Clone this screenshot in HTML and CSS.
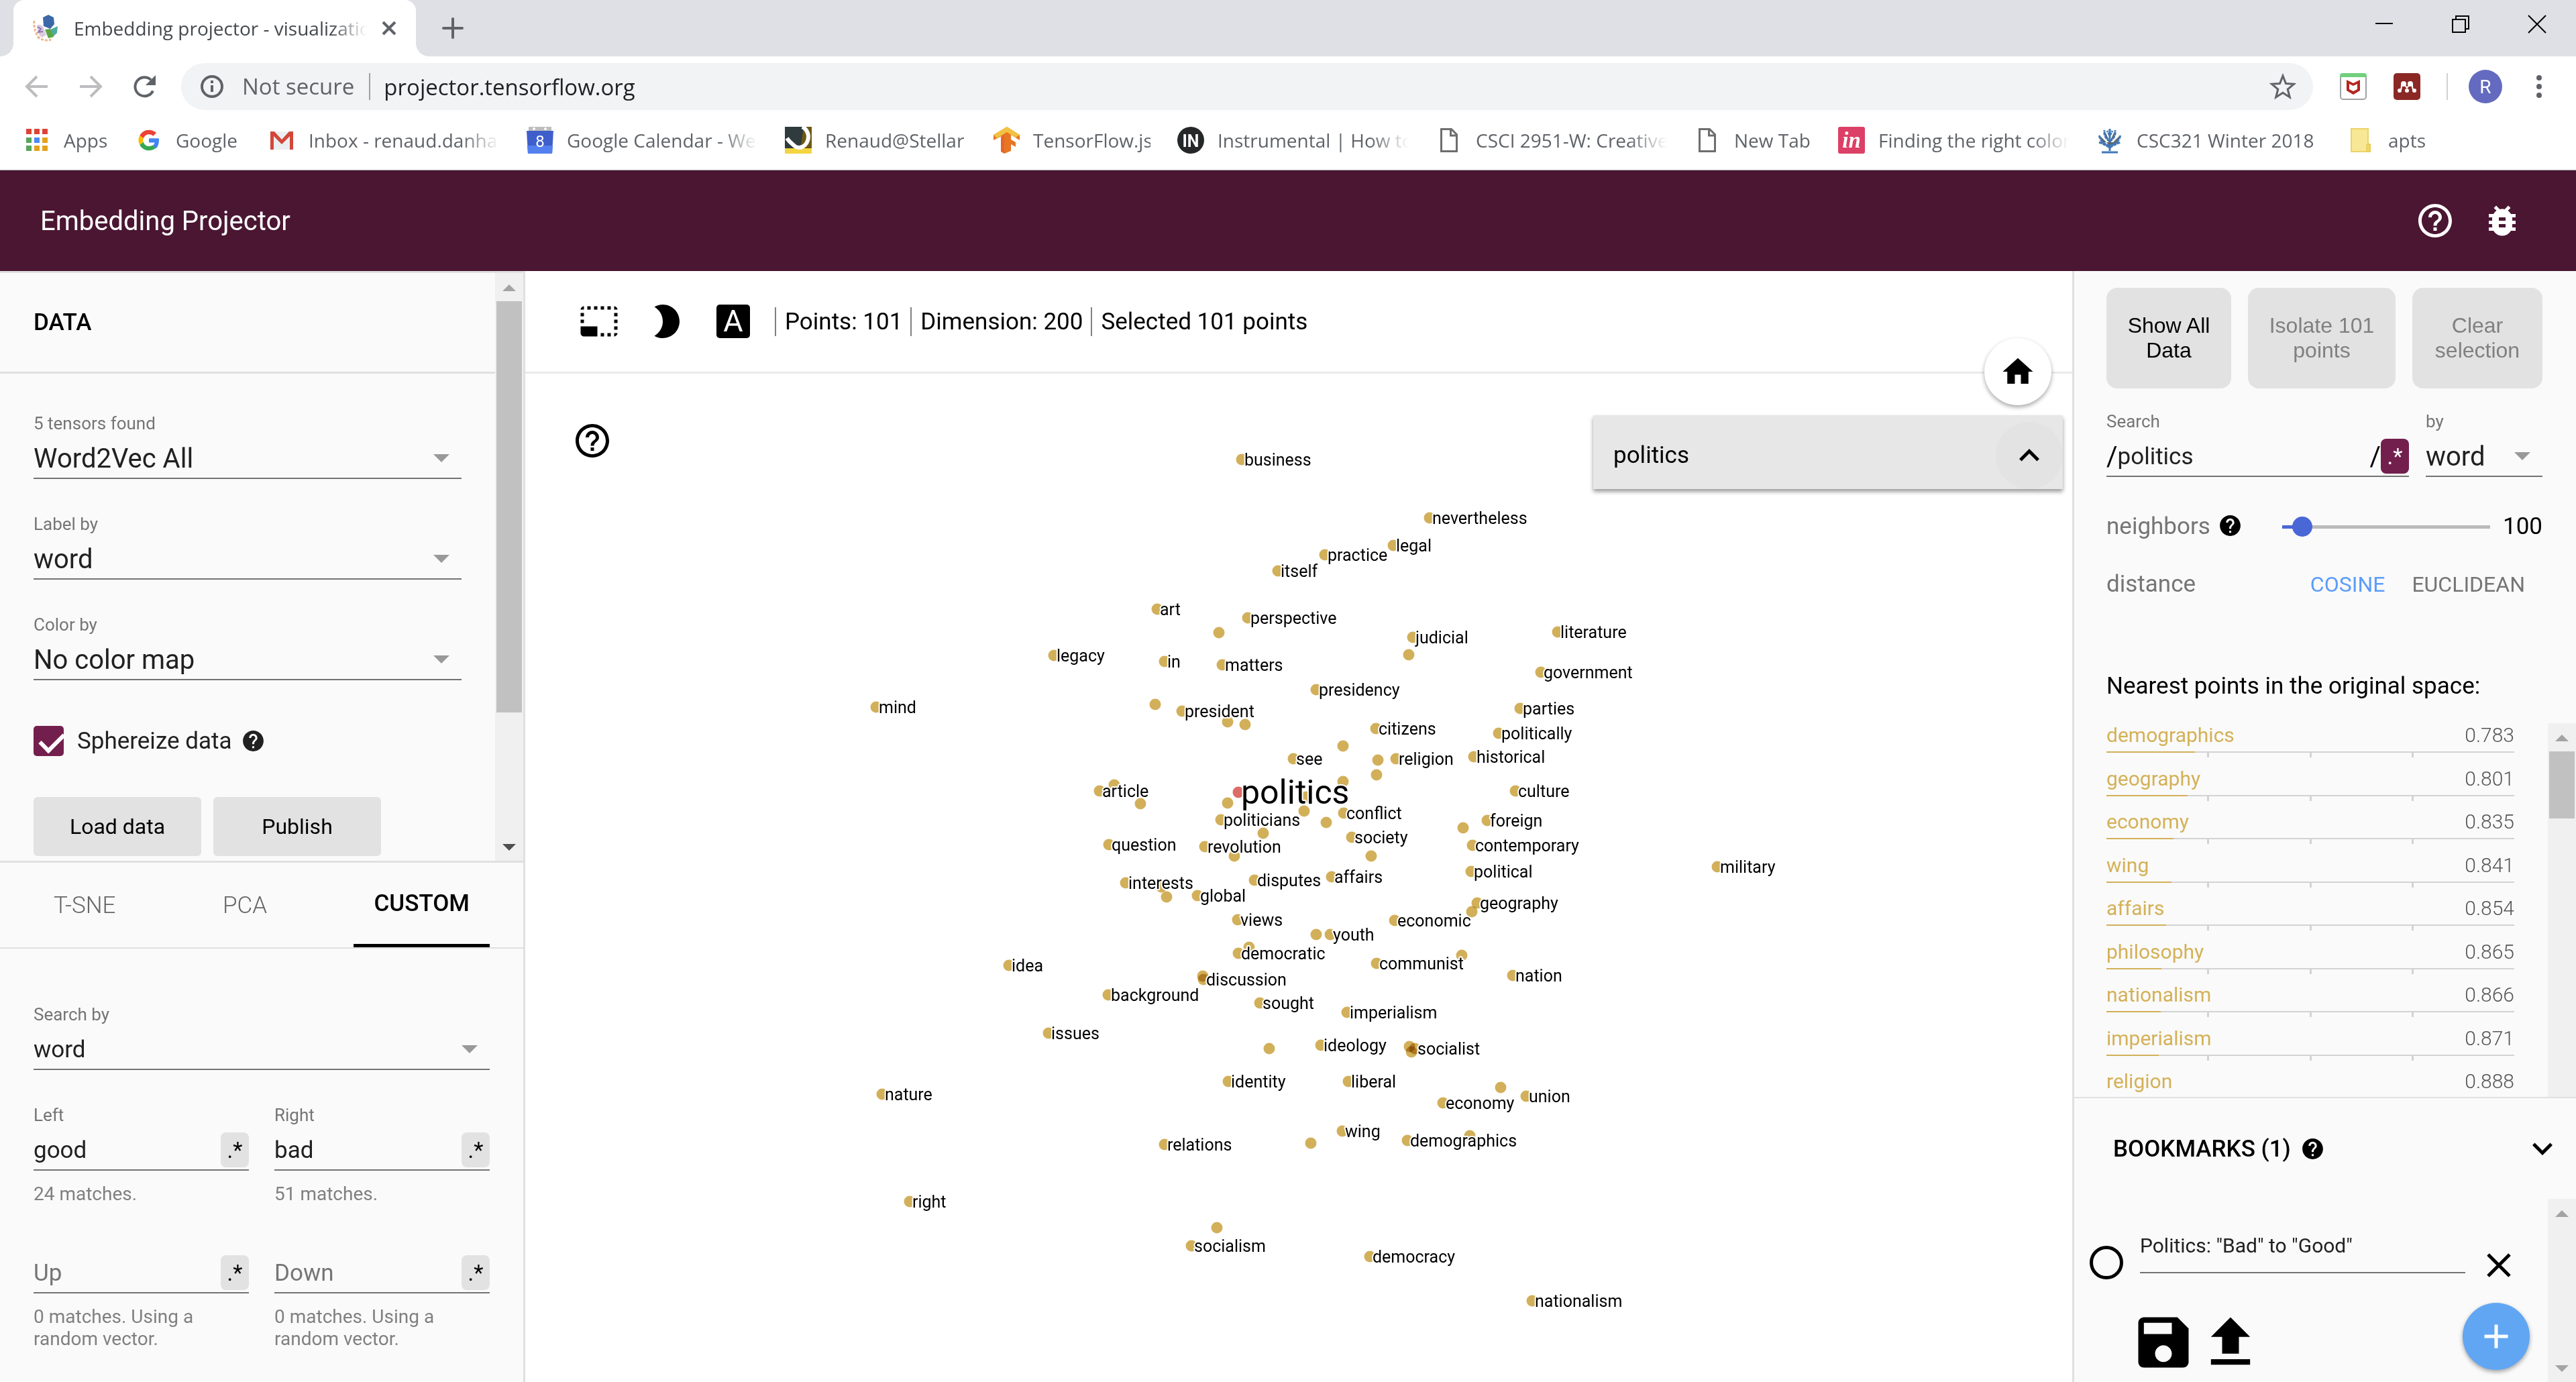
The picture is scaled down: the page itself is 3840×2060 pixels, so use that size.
FILE: index.html
```html
<!DOCTYPE html>
<html lang="en">
<head>
<meta charset="utf-8">
<title>Embedding projector - visualization of high-dimensional data</title>
<link rel="stylesheet" href="styles.css">
</head>
<body>
<svg class="defs" aria-hidden="true">
  <symbol id="help" viewBox="0 0 24 24"><path d="M12 2C6.48 2 2 6.48 2 12s4.48 10 10 10 10-4.48 10-10S17.52 2 12 2zm1 17h-2v-2h2v2zm2.07-7.75l-.9.92C13.45 12.9 13 13.5 13 15h-2v-.5c0-1.1.45-2.1 1.17-2.83l1.24-1.26c.37-.36.59-.86.59-1.41 0-1.1-.9-2-2-2s-2 .9-2 2H8c0-2.21 1.79-4 4-4s4 1.79 4 4c0 .88-.36 1.68-.93 2.25z"/></symbol>
  <symbol id="help-outline" viewBox="0 0 24 24"><path d="M11 18h2v-2h-2v2zm1-16C6.48 2 2 6.48 2 12s4.48 10 10 10 10-4.48 10-10S17.52 2 12 2zm0 18c-4.41 0-8-3.59-8-8s3.59-8 8-8 8 3.59 8 8-3.59 8-8 8zm0-14c-2.21 0-4 1.79-4 4h2c0-1.1.9-2 2-2s2 .9 2 2c0 2-3 1.75-3 5h2c0-2.25 3-2.5 3-5 0-2.21-1.79-4-4-4z"/></symbol>
  <symbol id="page" viewBox="0 0 40 40"><path d="M8.500 3.500h15l8 8v25h-23z" fill="#fff" stroke="#6e6e6e" stroke-width="3"/><path d="M22.500 4v9h9" fill="none" stroke="#6e6e6e" stroke-width="3"/></symbol>
</svg>

<div class="browser">
  <div class="tabstrip">
    <div class="browser-tab">
      <svg class="icon40" viewBox="0 0 40 40"><path d="M16 4l8-4 8 4 1 10-6 7-10-4z" fill="#3d68a8"/><path d="M27 22l11-5-1 10-6 6z" fill="#4fae9b"/><path d="M19 22l8-1 5 12-8 2z" fill="#5da544"/><path d="M7 16c4-3 9 0 10 4l4 10-6 4c-5-2-8-10-8-18z" fill="#d9cbe0"/><path d="M3 9c-1 10 2 20 8 26M8 33c6 5 14 6 20 4" fill="none" stroke="#ecb98a" stroke-width="3" stroke-dasharray="4 2"/><path d="M8 18l5 3-4 5 7-1" fill="none" stroke="#8f72b0" stroke-width="2"/></svg>
      <span class="browser-tab-title">Embedding projector - visualization</span>
      <button class="plain" aria-label="Close tab"><svg class="icon40" viewBox="0 0 40 40"><path d="M11 11l18 18M29 11L11 29" stroke="#5f6368" stroke-width="4" fill="none"/></svg></button>
    </div>
    <button class="plain new-tab" aria-label="New tab"><svg class="icon40" viewBox="0 0 40 40"><path d="M20 6v28M6 20h28" stroke="#5f6368" stroke-width="4" stroke-linecap="round"/></svg></button>
    <div class="window-buttons">
      <button class="plain" aria-label="Minimize"><svg class="icon40" viewBox="0 0 40 40"><path d="M7 19h26" stroke="#000" stroke-width="2"/></svg></button>
      <button class="plain" aria-label="Restore"><svg class="icon40" viewBox="0 0 40 40"><path d="M8 13h19v19H8zM13 13V8h19v19h-5" stroke="#000" stroke-width="2" fill="none"/></svg></button>
      <button class="plain" aria-label="Close"><svg class="icon40" viewBox="0 0 40 40"><path d="M7 7l26 26M33 7L7 33" stroke="#000" stroke-width="2"/></svg></button>
    </div>
  </div>

  <div class="navbar">
    <button class="plain" aria-label="Back"><svg class="icon40" viewBox="0 0 40 40"><path d="M36 20H6M20 5L5 20l15 15" stroke="#bcbdbf" stroke-width="4" fill="none"/></svg></button>
    <button class="plain" aria-label="Forward"><svg class="icon40" viewBox="0 0 40 40"><path d="M4 20h30M20 5l15 15-15 15" stroke="#bcbdbf" stroke-width="4" fill="none"/></svg></button>
    <button class="plain" aria-label="Reload"><svg class="icon40" viewBox="0 0 40 40"><path d="M33 26.500A14 14 0 1 1 30 10" stroke="#5f6368" stroke-width="4" fill="none"/><path d="M37 3v15H22z" fill="#5f6368"/></svg></button>
    <div class="omnibox">
      <svg class="icon40" viewBox="0 0 40 40"><circle cx="20" cy="20" r="15" fill="none" stroke="#5f6368" stroke-width="4"/><path d="M20 18v10M20 11v4" stroke="#5f6368" stroke-width="4"/></svg>
      <span class="not-secure">Not secure</span>
      <input class="url" type="text" value="projector.tensorflow.org" aria-label="Address">
      <svg class="icon40" viewBox="0 0 40 40"><path d="M20 4l4.500 11.500 12 .8-9.300 7.700 3.100 12L20 29.300 9.700 36l3.100-12L3.500 16.300l12-.8z" fill="none" stroke="#5f6368" stroke-width="3"/></svg>
    </div>
    <svg class="icon40" viewBox="0 0 40 40"><rect x="1" y="1" width="38" height="38" rx="4" fill="#fff" stroke="#9fa2a5" stroke-width="2"/><path d="M4 0h32a4 4 0 0 1 4 4v2H0V4a4 4 0 0 1 4-4z" fill="#71d07d"/><path d="M10 10l10 5 10-5v16l-10 6-10-6zm4 6v8l6 3 6-3v-8l-6 3z" fill="#b3261e"/></svg>
    <svg class="icon40" viewBox="0 0 40 40"><rect width="40" height="40" rx="5" fill="#8b2826"/><circle cx="15" cy="16" r="4" fill="#fff"/><circle cx="25" cy="16" r="4" fill="#fff"/><path d="M8 26c3 0 4-2 4-9M32 26c-3 0-4-2-4-9M20 27v-7M16 17l4 5 4-5" stroke="#fff" stroke-width="2" fill="none"/><circle cx="9" cy="26" r="3" fill="#fff"/><circle cx="20" cy="26" r="3" fill="#fff"/><circle cx="31" cy="26" r="3" fill="#fff"/></svg>
    <button class="avatar" aria-label="Profile">R</button>
    <button class="plain" aria-label="Menu"><svg class="icon40" viewBox="0 0 40 40" fill="#5f6368"><circle cx="20" cy="7" r="4"/><circle cx="20" cy="20" r="4"/><circle cx="20" cy="33" r="4"/></svg></button>
  </div>

  <nav class="bookmark-bar">
    <a href="#"><svg class="icon40" viewBox="0 0 40 40"><path d="M4 3h8v8H4zM16 3h8v8h-8zM28 3h8v8h-8z" fill="#db4437"/><path d="M4 16h8v8H4zM4 28h8v8H4z" fill="#57a55a"/><path d="M16 16h8v8h-8z" fill="#4a8af4"/><path d="M28 16h8v8h-8zM16 28h8v8h-8zM28 28h8v8h-8z" fill="#e3a21a"/></svg><span>Apps</span></a>
    <a href="#"><svg class="icon40" viewBox="0 0 48 48"><path fill="#EA4335" d="M24 13.500c3 0 5.600 1 7.600 3l5.700-5.600C33.900 7.700 29.400 5.700 24 5.700c-7.200 0-13.400 4.100-16.500 10.100l6.600 5.100c1.600-4.300 5.400-7.400 9.900-7.400z"/><path fill="#4285F4" d="M42 24.400c0-1.400-.1-2.600-.4-3.800H24v7.500h10.200c-.4 2.500-1.800 4.500-4 5.900l6.300 4.900c3.700-3.400 5.500-8.500 5.500-14.500z"/><path fill="#FBBC05" d="M14.100 27.200a11 11 0 0 1 0-6.900l-6.600-5.100a18.300 18.300 0 0 0 0 17.100z"/><path fill="#34A853" d="M24 42.300c5 0 9.200-1.600 12.500-4.400L30.200 33c-1.700 1.200-3.900 1.900-6.200 1.900-4.500 0-8.400-3.300-9.900-7.700l-6.600 5.100C10.600 38.300 16.800 42.300 24 42.300z"/></svg><span>Google</span></a>
    <a href="#"><svg class="icon40" viewBox="0 0 40 40"><path d="M3 7h34v27H3z" fill="#eceff1"/><path d="M3 7h6l11 12L31 7h6v27h-5V14L20 26 8 14v20H3z" fill="#d2473a"/></svg><span class="fade">Inbox - renaud.danhaive</span></a>
    <a href="#"><svg class="icon40" viewBox="0 0 40 40"><path d="M3 0h34v8H3z" fill="#bdbdbd"/><circle cx="11" cy="3" r="2" fill="#fff"/><circle cx="28" cy="3" r="2" fill="#fff"/><path d="M0 6h40l-2 34H2z" fill="#3e5fcb"/><path d="M1 28h38l-1 12H2z" fill="#5480ef"/><text x="20" y="30" class="calendar-day">8</text></svg><span class="fade">Google Calendar - Week</span></a>
    <a href="#"><svg class="icon40" viewBox="0 0 40 40"><path d="M0 0h40v40H0z" fill="#2f3b3d"/><path d="M28 0h12v40H22z" fill="#6e5713"/><path d="M0 32h40v8H0z" fill="#f3d541"/><path d="M26 0c9 5 11 15 7 23-4 8-13 10-18 6s-8-6-12-12" fill="none" stroke="#fff" stroke-width="6"/></svg><span>Renaud@Stellar</span></a>
    <a href="#"><svg class="icon40" viewBox="0 0 40 40"><path d="M21 0l19 12v8l-13-8v7l7 4v7l-7-4v10l-10 4V12L1 20v-8z" fill="#e87524"/><path d="M21 0l19 12-6 4-13-8L6 17l-5-5z" fill="#f2c343"/><path d="M12 15l5-4v29l-5-3z" fill="#e2662a"/></svg><span>TensorFlow.js</span></a>
    <a href="#"><svg class="icon40" viewBox="0 0 40 40"><circle cx="20" cy="20" r="20" fill="#252829"/><text x="20" y="30" class="in-mark">IN</text></svg><span class="fade">Instrumental | How to build</span></a>
    <a href="#"><svg class="icon40"><use href="#page"/></svg><span class="fade">CSCI 2951-W: Creative AI</span></a>
    <a href="#"><svg class="icon40"><use href="#page"/></svg><span>New Tab</span></a>
    <a href="#"><svg class="icon40" viewBox="0 0 40 40"><rect width="40" height="40" rx="3" fill="#dc4066"/><text x="20" y="31" class="invision-mark">in</text></svg><span class="fade">Finding the right color p</span></a>
    <a href="#"><svg class="icon40" viewBox="0 0 40 40" fill="none" stroke="#3f79b8"><path d="M20 3v33M8 38h24" stroke-width="3"/><path d="M20 28C12 26 6 22 4 12M20 28c8-2 14-6 16-16M20 22C14 18 11 12 12 5M20 22c6-4 9-10 8-17M4 23c5 2 10 4 16 8 6-4 11-6 16-8M20 13l-4-7M20 13l4-7" stroke-width="3" stroke-dasharray="5 1"/></svg><span>CSC321 Winter 2018</span></a>
    <a href="#"><svg class="icon40" viewBox="0 0 40 40"><path d="M5 3h25v23h3v11H5z" fill="#f8e795" stroke="#ecd367" stroke-width="2"/><path d="M28 26h5v11h-5z" fill="#f2d666" stroke="#e3c34c" stroke-width="1"/></svg><span>apts</span></a>
  </nav>
</div>

<header class="app-header">
  <h1>Embedding Projector</h1>
  <div class="app-header-icons">
    <button class="plain" aria-label="Help"><svg class="icon60"><use href="#help-outline"/></svg></button>
    <button class="plain" aria-label="Report a bug"><svg class="icon60" viewBox="0 0 24 24"><path d="M20 8h-2.810c-.45-.78-1.070-1.450-1.820-1.960L17 4.410 15.590 3l-2.170 2.170C12.960 5.060 12.490 5 12 5c-.49 0-.96.06-1.410.17L8.410 3 7 4.410l1.620 1.630C7.880 6.550 7.260 7.220 6.810 8H4v2h2.090c-.05.33-.09.66-.09 1v1H4v2h2v1c0 .34.04.67.09 1H4v2h2.810c1.040 1.790 2.970 3 5.190 3s4.150-1.210 5.190-3H20v-2h-2.090c.05-.33.09-.66.09-1v-1h2v-2h-2v-1c0-.34-.04-.67-.09-1H20V8zm-6 8h-4v-2h4v2zm0-4h-4v-2h4v2z"/></svg></button>
  </div>
</header>

<main class="app">
  <aside class="left">
    <section class="data">
      <div class="data-content">
        <h2 class="data-title">DATA</h2>
        <div class="data-form">
          <div class="field large">
            <label for="tensor">5 tensors found</label>
            <div class="control"><select id="tensor"><option>Word2Vec All</option></select><span class="caret"></span></div>
          </div>
          <div class="field large">
            <label for="label-by">Label by</label>
            <div class="control"><select id="label-by"><option>word</option></select><span class="caret"></span></div>
          </div>
          <div class="field large">
            <label for="color-by">Color by</label>
            <div class="control"><select id="color-by"><option>No color map</option></select><span class="caret"></span></div>
          </div>
          <div class="sphereize">
            <input type="checkbox" id="sphereize" checked>
            <label for="sphereize">Sphereize data</label>
            <svg class="help-mark"><use href="#help"/></svg>
          </div>
          <div class="data-buttons"><button>Load data</button><button>Publish</button></div>
        </div>
      </div>
      <div class="scrollbar" aria-hidden="true"><i class="up"></i><b class="thumb data-thumb"></b><i class="down dark"></i></div>
    </section>
    <div class="tabs" role="tablist">
      <button role="tab">T-SNE</button>
      <button role="tab">PCA</button>
      <button role="tab" class="active" aria-selected="true">CUSTOM</button>
    </div>
    <section class="custom">
      <div class="field">
        <label for="search-by">Search by</label>
        <div class="control"><select id="search-by"><option>word</option></select><span class="caret"></span></div>
      </div>
      <div class="field">
        <label for="left">Left</label>
        <div class="control"><input id="left" type="text" value="good"><button class="regex" aria-label="Regex">.*</button></div>
        <p>24 matches.</p>
      </div>
      <div class="field">
        <label for="right">Right</label>
        <div class="control"><input id="right" type="text" value="bad"><button class="regex" aria-label="Regex">.*</button></div>
        <p>51 matches.</p>
      </div>
      <div class="field unlabeled">
        <div class="control"><input type="text" placeholder="Up" aria-label="Up"><button class="regex" aria-label="Regex">.*</button></div>
        <p>0 matches. Using a random vector.</p>
      </div>
      <div class="field unlabeled">
        <div class="control"><input type="text" placeholder="Down" aria-label="Down"><button class="regex" aria-label="Regex">.*</button></div>
        <p>0 matches. Using a random vector.</p>
      </div>
    </section>
  </aside>

  <section class="center">
    <div class="toolbar">
      <button class="plain" aria-label="Select"><svg class="icon60" viewBox="0 0 24 24"><path d="M23 15h-2v2h2v-2zm0-4h-2v2h2v-2zm0 8h-2v2c1 0 2-1 2-2zM15 3h-2v2h2V3zm8 4h-2v2h2V7zm-2-4v2h2c0-1-1-2-2-2zM3 21h8v-6H1v4c0 1.100.9 2 2 2zM3 7H1v2h2V7zm12 12h-2v2h2v-2zm4-16h-2v2h2V3zm0 16h-2v2h2v-2zM3 3C2 3 1 4 1 5h2V3zm0 8H1v2h2v-2zm8-8H9v2h2V3zM7 3H5v2h2V3z"/></svg></button>
      <button class="plain" aria-label="Night mode"><svg class="icon60" viewBox="0 0 24 24"><path d="M10 2c-1.820 0-3.530.5-5 1.350C7.990 5.080 10 8.300 10 12s-2.010 6.920-5 8.650C6.470 21.500 8.180 22 10 22c5.520 0 10-4.480 10-10S15.520 2 10 2z"/></svg></button>
      <button class="labels-mode" aria-label="3D labels">A</button>
      <div class="stats"><span>Points: 101</span><span>Dimension: 200</span><span>Selected 101 points</span></div>
    </div>
    <svg class="plot" id="plot" viewBox="783 557 2306 1503"></svg>
    <button class="plain plot-help" aria-label="Plot help"><svg class="icon60"><use href="#help-outline"/></svg></button>
    <button class="home" aria-label="Reset view"><svg viewBox="0 0 24 24"><path d="M10 20v-6h4v6h5v-8h3L12 3 2 12h3v8z"/></svg></button>
    <div class="metadata">
      <span>politics</span>
      <button aria-label="Collapse"><svg class="icon60" viewBox="0 0 24 24"><path d="M12 8l-6 6 1.410 1.410L12 10.830l4.590 4.580L18 14z"/></svg></button>
    </div>
  </section>

  <aside class="right">
    <section class="inspector">
      <div class="selection-buttons">
        <button class="show-all">Show All<br>Data</button>
        <button class="isolate" disabled>Isolate 101<br>points</button>
        <button class="clear" disabled>Clear<br>selection</button>
      </div>
      <div class="search-row">
        <div class="field search">
          <label for="search">Search</label>
          <div class="control"><span class="slash">/</span><input id="search" type="text" value="politics"><span class="slash">/</span><button class="regex on" aria-label="Regex">.*</button></div>
        </div>
        <div class="field large by">
          <label for="by">by</label>
          <div class="control"><select id="by"><option>word</option></select><span class="caret"></span></div>
        </div>
      </div>
      <div class="neighbors">
        <label for="neighbors">neighbors</label>
        <svg class="help-mark"><use href="#help"/></svg>
        <input id="neighbors" type="range" min="5" max="999" value="58">
        <output for="neighbors">100</output>
      </div>
      <div class="distance"><span>distance</span><a href="#" class="chosen">COSINE</a><a href="#">EUCLIDEAN</a></div>
      <h3>Nearest points in the original space:</h3>
    </section>
    <section class="nearest">
      <ol id="nearest"></ol>
      <div class="scrollbar" aria-hidden="true"><i class="up"></i><b class="thumb nearest-thumb"></b></div>
    </section>
    <section class="bookmarks">
      <div class="bookmarks-head">
        <h2>BOOKMARKS (1)</h2>
        <svg class="help-mark"><use href="#help"/></svg>
        <button class="plain" aria-label="Toggle bookmarks"><svg class="icon60" viewBox="0 0 24 24"><path d="M16.590 8.590L12 13.170 7.410 8.590 6 10l6 6 6-6z"/></svg></button>
      </div>
      <div class="bookmarks-body">
        <div class="bookmarks-content">
          <div class="bookmark">
            <input type="radio" name="bookmark" aria-label="Load bookmark">
            <input type="text" value="Politics: &quot;Bad&quot; to &quot;Good&quot;" aria-label="Bookmark name">
            <button class="plain" aria-label="Delete bookmark"><svg viewBox="0 0 42 42"><path d="M5 5l32 32M37 5L5 37" stroke="#000" stroke-width="5"/></svg></button>
          </div>
          <div class="bookmark-actions">
            <button class="plain" aria-label="Save"><svg class="icon100" viewBox="0 0 24 24"><path d="M17 3H5c-1.110 0-2 .9-2 2v14c0 1.100.89 2 2 2h14c1.100 0 2-.9 2-2V7l-4-4zm-5 16c-1.660 0-3-1.340-3-3s1.340-3 3-3 3 1.340 3 3-1.340 3-3 3zm3-10H5V5h10v4z"/></svg></button>
            <button class="plain" aria-label="Upload"><svg class="icon100" viewBox="0 0 24 24"><path d="M9 16h6v-6h4l-7-7-7 7h4zm-4 2h14v2H5z"/></svg></button>
            <button class="add" aria-label="Add bookmark"><svg class="icon60" viewBox="0 0 24 24"><path d="M19 13h-6v6h-2v-6H5v-2h6V5h2v6h6v2z"/></svg></button>
          </div>
        </div>
        <div class="scrollbar" aria-hidden="true"><i class="up"></i><i class="down"></i></div>
      </div>
    </section>
  </aside>
</main>
<script src="plot.js"></script>
</body>
</html>
```
FILE: plot.js
```js
// Projected points: x, y and, where one is shown, the label.
const points = [
  [1851, 685, 'business'], [2131, 772, 'nevertheless'], [2077, 813, 'legal'], [1975, 827, 'practice'],
  [1905, 851, 'itself'], [1725, 908, 'art'], [1860, 921, 'perspective'], [1817, 943], [1571, 977, 'legacy'],
  [1736, 986, 'in'], [1822, 991, 'matters'], [2106, 950, 'judicial'], [2100, 976], [2322, 942, 'literature'],
  [2297, 1002, 'government'], [1962, 1028, 'presidency'], [1306, 1054, 'mind'], [1722, 1050],
  [1762, 1060, 'president'], [1830, 1076], [1856, 1080], [2266, 1056, 'parties'], [2234, 1093, 'politically'],
  [2197, 1128, 'historical'], [2051, 1086, 'citizens'], [2002, 1112], [2054, 1133], [2052, 1155],
  [2081, 1131, 'religion'], [1928, 1131, 'see'], [2002, 1165], [2259, 1179, 'culture'], [1661, 1170],
  [1639, 1179, 'article'], [1700, 1198], [1830, 1197], [1947, 1188], [1944, 1209], [1820, 1222, 'politicians'],
  [2003, 1212, 'conflict'], [1977, 1226], [1883, 1242], [2015, 1248, 'society'], [2217, 1223, 'foreign'],
  [2181, 1234], [2195, 1260, 'contemporary'], [1653, 1259, 'question'], [1796, 1262, 'revolution'],
  [1840, 1276], [2044, 1276], [2193, 1299, 'political'], [2560, 1292, 'military'], [1678, 1316, 'interests'],
  [1731, 1322], [1739, 1337], [1785, 1335, 'global'], [1870, 1312, 'disputes'], [1985, 1307, 'affairs'],
  [2202, 1346, 'geography'], [2194, 1359], [1845, 1371, 'views'], [2079, 1372, 'economic'], [1962, 1393],
  [1983, 1393, 'youth'], [1862, 1412], [1846, 1421, 'democratic'], [2052, 1436, 'communist'], [2179, 1424],
  [1504, 1439, 'idea'], [2255, 1454, 'nation'], [1793, 1455], [1794, 1460, 'discussion'],
  [1652, 1483, 'background'], [1878, 1495, 'sought'], [2008, 1509, 'imperialism'], [1563, 1540, 'issues'],
  [1969, 1558, 'ideology'], [1892, 1563], [2101, 1560], [2104, 1568], [2109, 1563, 'socialist'],
  [1831, 1612, 'identity'], [2010, 1612, 'liberal'], [1315, 1631, 'nature'], [2237, 1621],
  [2275, 1634, 'union'], [2151, 1644, 'economy'], [2001, 1686, 'wing'], [2191, 1693],
  [2098, 1700, 'demographics'], [1736, 1706, 'relations'], [1954, 1704], [1356, 1791, 'right'],
  [1814, 1830], [1776, 1857, 'socialism'], [2042, 1873, 'democracy'], [2284, 1939, 'nationalism']
];
const dots = points.map(([x, y]) => `<circle class="dot" cx="${x}" cy="${y}" r="8.5"/>`);
const labels = points.filter(p => p[2]).map(([x, y, t]) => `<text x="${x + 4}" y="${y + 9}">${t}</text>`);
document.getElementById('plot').innerHTML =
  dots.join('') + '<circle class="dot selected" cx="1846" cy="1181" r="8.5"/>' +
  labels.join('') + '<text class="big" x="1850" y="1198">politics</text>';

// Cosine distance of each neighbour; the bar shows how close it is.
const nearest = [['demographics', 0.783], ['geography', 0.801], ['economy', 0.835], ['wing', 0.841],
  ['affairs', 0.854], ['philosophy', 0.865], ['nationalism', 0.866], ['imperialism', 0.871], ['religion', 0.888]];
document.getElementById('nearest').innerHTML = nearest.map(([word, d]) =>
  `<li><a href="#"><span>${word}</span><em>${d.toFixed(3)}</em></a>` +
  `<div class="bar"><b style="width:${((1 - d) * 100).toFixed(1)}%"></b></div><div class="ticks"><i></i><i></i><i></i></div></li>`).join('');
```
FILE: styles.css
```css
* { box-sizing: border-box; }

body {
  margin: 0;
  height: 100vh;
  display: flex;
  flex-direction: column;
  overflow: hidden;
  font-family: Roboto, "Liberation Sans", sans-serif;
  font-size: 35px;
  color: #000;
  background: #fff;
}

h1, h2, h3, p, ol { margin: 0; padding: 0; font-weight: 400; font-size: 35px; }
a { text-decoration: none; color: inherit; }
button, input, select { font: inherit; color: inherit; margin: 0; padding: 0; border: 0; outline: 0; background: none; }
svg { display: block; flex: none; fill: currentColor; }
.defs { position: absolute; width: 0; height: 0; }
.plain { display: block; flex: none; }
.icon40 { width: 40px; height: 40px; }
.icon60 { width: 60px; height: 60px; }
.icon100 { width: 100px; height: 100px; }
.help-mark { width: 37px; height: 37px; }

/* Browser window */
.browser {
  flex: none;
  font-family: "Open Sans", "Noto Sans", sans-serif;
  font-size: 28px;
  color: #5f6368;
  border-bottom: 1px solid #a9a9a9;
}
.tabstrip { height: 84px; display: flex; align-items: center; padding-left: 20px; background: #dee0e5; }
.browser-tab {
  position: relative;
  width: 600px;
  height: 84px;
  display: flex;
  align-items: center;
  padding: 0 20px 0 28px;
  background: #fff;
  border-radius: 16px 16px 0 0;
}
.browser-tab::before, .browser-tab::after {
  content: "";
  position: absolute;
  bottom: 0;
  width: 20px;
  height: 20px;
}
.browser-tab::before { left: -20px; background: radial-gradient(circle at 0 0, transparent 20px, #fff 20px); }
.browser-tab::after { right: -20px; background: radial-gradient(circle at 100% 0, transparent 20px, #fff 20px); }
.browser-tab-title {
  flex: 1;
  margin: 0 13px 0 22px;
  overflow: hidden;
  white-space: nowrap;
  color: #45494d;
  mask-image: linear-gradient(to right, #000 88%, transparent);
}
.new-tab { margin-left: 35px; }
.window-buttons { margin-left: auto; display: flex; gap: 74px; padding: 0 38px 12px 0; }

.navbar { height: 90px; display: flex; align-items: center; padding: 0 35px; gap: 40px; }
.omnibox {
  flex: 1;
  height: 70px;
  display: flex;
  align-items: center;
  margin-left: -5px;
  padding: 0 25px 0 26px;
  border-radius: 35px;
  background: #f1f3f4;
  font-size: 33px;
}
.not-secure { margin-left: 25px; padding-right: 22px; line-height: 40px; border-right: 2px solid #9fa2a5; }
.url { flex: 1; padding-left: 20px; color: #202124; }
.avatar { position: relative; width: 50px; height: 50px; margin-left: 32px; border-radius: 50%; background: #636abf; color: #fff; font-family: Roboto, sans-serif; }
.avatar::before { content: ""; position: absolute; left: -33px; top: 5px; width: 2px; height: 40px; background: #cfd1d4; }
.avatar + .plain { margin-left: -5px; }

.bookmark-bar {
  height: 79px;
  padding: 0 0 9px 35px;
  display: grid;
  grid-template-columns: 167px 198px 385px 385px 310px 275px 385px 385px 215px 385px 375px 1fr;
  align-items: center;
}
.bookmark-bar a { display: flex; align-items: center; gap: 20px; padding-right: 40px; min-width: 0; white-space: nowrap; }
.bookmark-bar span { overflow: hidden; }
.bookmark-bar .fade { mask-image: linear-gradient(to right, #000 80%, transparent); }
.calendar-day { font-size: 24px; fill: #fff; text-anchor: middle; font-family: Roboto, sans-serif; }
.in-mark { font: 700 25px Roboto, sans-serif; fill: #fff; text-anchor: middle; }
.invision-mark { font: italic 700 33px "Liberation Serif", serif; fill: #fff; text-anchor: middle; }

/* Application header */
.app-header {
  flex: none;
  height: 150px;
  display: flex;
  align-items: center;
  justify-content: space-between;
  padding: 0 80px 0 60px;
  background: #4a1632;
  color: #fff;
}
.app-header h1 { font-size: 40px; }
.app-header-icons { display: flex; gap: 40px; }

.app { flex: 1; min-height: 0; display: grid; grid-template-columns: 783px 1fr 751px; }
.left, .right { display: flex; flex-direction: column; min-height: 0; background: #fafafa; }
.left { border-right: 3px solid #e0e0e0; }
.right { border-left: 3px solid #e0e0e0; }

/* Scrollbars */
.scrollbar { flex: none; width: 42px; display: flex; flex-direction: column; align-items: center; background: #f0f0f0; }
.scrollbar i { width: 20px; height: 10px; margin: 17px 0 15px; background: #a3a3a3; }
.scrollbar .up { clip-path: polygon(50% 0, 100% 100%, 0 100%); }
.scrollbar .down { clip-path: polygon(0 0, 100% 0, 50% 100%); margin-top: auto; }
.scrollbar .dark { background: #505050; }
.thumb { width: 38px; background: #c1c1c1; }
.data-thumb { height: 613px; }
.nearest-thumb { height: 100px; }

/* Form fields */
.field { min-width: 0; }
.field label { display: block; height: 30px; margin-bottom: 8px; font-size: 26px; line-height: 30px; color: #757575; }
.control { display: flex; align-items: center; height: 60px; border-bottom: 2px solid #737373; color: #212121; }
.large .control { font-size: 40px; }
.control select, .control input { flex: 1; width: 100%; min-width: 0; height: 58px; appearance: none; }
.search .control { font-size: 35px; }
.control input::placeholder { color: #757575; opacity: 1; }
.caret { flex: none; width: 24px; height: 12px; margin-right: 18px; background: #999; clip-path: polygon(0 0, 100% 0, 50% 100%); }
.field p { margin-top: 18px; font-size: 28px; line-height: 33px; color: #808080; }
.unlabeled { padding-top: 38px; }
.regex { flex: none; width: 42px; height: 52px; border-radius: 8px; background: #e2e2e2; color: #000; font-size: 33px; }
.regex.on { background: #731f4d; color: #fff; }

/* Data panel */
.data { display: flex; flex: none; border-top: 3px solid #e0e0e0; border-bottom: 3px solid #e0e0e0; }
.data-content { flex: 1; }
.data-title { height: 150px; padding-left: 50px; line-height: 147px; font-weight: 500; border-bottom: 3px solid #e0e0e0; }
.data-form { padding: 59px 50px 7px; }
.data-form .field { margin-bottom: 52px; }
.sphereize { display: flex; align-items: center; height: 45px; margin-top: 68px; color: #212121; }
.sphereize input { width: 45px; height: 45px; appearance: none; border-radius: 5px; background: #731f4d; position: relative; }
.sphereize input:checked::after {
  content: "";
  position: absolute;
  left: 17px;
  top: 3px;
  width: 15px;
  height: 30px;
  border: solid #fff;
  border-width: 0 6px 6px 0;
  transform: rotate(45deg);
}
.sphereize label { margin: 0 14px 0 20px; }
.data-buttons { display: flex; gap: 18px; margin-top: 61px; }
.data-buttons button { width: 250px; height: 88px; border-radius: 6px; background: #e2e2e2; font-size: 32px; }

/* Projection tabs */
.tabs { flex: none; display: flex; justify-content: space-between; padding: 0 50px; height: 128px; border-bottom: 2px solid #e0e0e0; }
.tabs button { padding: 0 30px; font-weight: 300; color: #666; }
.tabs .active { font-weight: 500; color: #000; border-bottom: 5px solid #000; }
.custom {
  flex: 1;
  padding: 83px 50px 0;
  display: grid;
  grid-template-columns: 1fr 1fr;
  column-gap: 38px;
  align-content: start;
}
.custom .field:first-child { grid-column: 1 / 3; margin-bottom: 52px; }
.custom .unlabeled { margin-top: 34px; }

/* Plot */
.center { position: relative; display: flex; flex-direction: column; min-width: 0; min-height: 0; background: #fff; }
.toolbar { flex: none; display: flex; align-items: center; gap: 40px; height: 153px; padding-left: 80px; border-bottom: 3px solid #ebebeb; }
.labels-mode { width: 50px; height: 50px; margin-left: 5px; border-radius: 5px; background: #000; color: #fff; font-size: 45px; line-height: 50px; }
.stats { display: flex; margin-left: -3px; }
.stats span { padding: 0 12px 0 13px; border-left: 2px solid #808080; line-height: 43px; }
.plot { flex: 1; width: 100%; min-height: 0; font-size: 25px; }
.plot text { fill: #000; stroke: #fff; stroke-width: 4px; stroke-linejoin: round; paint-order: stroke; }
.plot .big { font-size: 50px; }
.dot { fill: #d2b05a; mix-blend-mode: multiply; }
.dot.selected { fill: #dd6b66; }
.plot-help { position: absolute; left: 70px; top: 223px; }
.home {
  position: absolute;
  right: 31px;
  top: 100px;
  width: 100px;
  height: 100px;
  display: grid;
  place-items: center;
  border-radius: 50%;
  background: #fff;
  box-shadow: 0 3px 6px rgba(0, 0, 0, .35);
}
.home svg { width: 54px; height: 54px; }
.metadata {
  position: absolute;
  right: 14px;
  top: 215px;
  width: 700px;
  height: 110px;
  display: flex;
  align-items: center;
  justify-content: space-between;
  padding: 9px 0 0 30px;
  background: #e7e7e7;
  box-shadow: 0 4px 6px rgba(0, 0, 0, .4);
}
.metadata button { width: 100px; height: 100px; display: grid; place-items: center; border-radius: 50%; background: #e3e3e3; }

/* Inspector */
.inspector { flex: none; padding: 25px 50px 35px 48px; }
.selection-buttons { display: flex; justify-content: space-between; }
.selection-buttons button { height: 150px; border-radius: 16px; background: #e2e2e2; font: 32px/37px "Liberation Sans", sans-serif; }
.selection-buttons button:disabled { color: #808080; }
.show-all { width: 186px; }
.isolate { width: 220px; }
.clear { width: 194px; }
.search-row { display: flex; gap: 25px; margin-top: 34px; }
.search { flex: 1; }
.by { flex: none; width: 174px; }
.search .slash { font-size: 40px; color: #000; }
.neighbors, .distance { display: flex; height: 40px; line-height: 40px; color: #757575; }
.neighbors { margin-top: 54px; }
.neighbors .help-mark { margin-left: 11px; color: #000; }
.neighbors input {
  appearance: none;
  width: 310px;
  height: 40px;
  margin: 0 19px 0 auto;
  background: linear-gradient(to right, #4a67d6 10%, #bababa 10%) center / 100% 5px no-repeat;
}
.neighbors input::-webkit-slider-thumb { appearance: none; width: 30px; height: 30px; border-radius: 50%; background: #4a67d6; }
.neighbors output { color: #000; }
.distance { margin-top: 46px; }
.distance span { margin-right: auto; }
.distance a { margin-right: 26px; font-size: 32px; }
.distance .chosen { margin-right: 40px; color: #5c9cf9; }
.inspector h3 { margin-top: 112px; line-height: 40px; }

.nearest { flex: 1; min-height: 0; display: flex; justify-content: space-between; overflow: hidden; }
.nearest ol { flex: 1; margin: 0 50px 0 48px; list-style: none; display: grid; grid-template-rows: repeat(5, 65px 64px); }
.nearest a { display: flex; justify-content: space-between; margin-bottom: 6px; font-size: 30px; line-height: 36px; color: #d4b158; }
.nearest em { font-style: normal; font-weight: 300; color: #555; }
.bar { height: 2px; background: #d3d3d3; }
.bar b { display: block; height: 2px; background: #d2b05a; }
.ticks { display: flex; justify-content: space-evenly; }
.ticks i { width: 3px; height: 7px; background: #d3d3d3; }

/* Bookmarks */
.bookmarks { flex: none; border-top: 2px solid #e0e0e0; }
.bookmarks-head { display: flex; align-items: center; height: 150px; padding: 0 20px 0 58px; }
.bookmarks-head h2 { font-weight: 500; }
.bookmarks-head .help-mark { margin: 0 auto 0 14px; }
.bookmarks-body { display: flex; }
.bookmarks-content { flex: 1; padding: 40px 27px 9px 23px; }
.bookmark { display: flex; align-items: flex-end; height: 80px; }
.bookmark [type="radio"] { appearance: none; width: 50px; height: 50px; border: 5px solid #000; border-radius: 50%; }
.bookmark [type="text"] { width: 485px; height: 71px; margin: 0 29px 9px 25px; padding-bottom: 11px; font-size: 30px; color: #212121; border-bottom: 2px solid #737373; }
.bookmark svg { width: 42px; height: 42px; }
.bookmark-actions { display: flex; align-items: flex-end; height: 109px; margin-top: 35px; padding-left: 60px; }
.add {
  width: 100px;
  height: 100px;
  margin-left: auto;
  align-self: flex-start;
  display: grid;
  place-items: center;
  border-radius: 50%;
  background: #61a6f2;
  color: #fff;
  box-shadow: 0 3px 6px rgba(0, 0, 0, .35);
}
```
